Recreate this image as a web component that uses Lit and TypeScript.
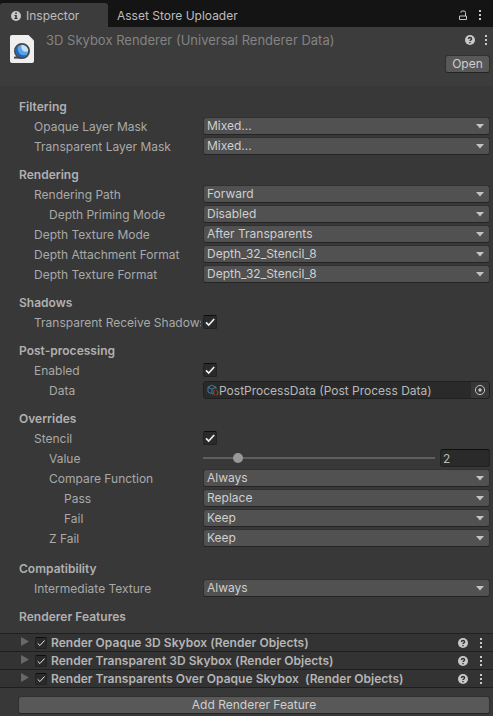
import { LitElement, html, css } from "lit";
import { customElement } from "lit/decorators.js";
import { classMap } from "lit/directives/class-map.js";

type Row = {
  label: string;
  depth?: number;
  kind: "menu" | "check" | "object" | "slider";
  value?: string;
};
type Section = { title: string; rows: Row[]; last?: boolean };

const menu = (label: string, value: string, depth = 1): Row => ({ label, value, depth, kind: "menu" });

const SECTIONS: Section[] = [
  {
    title: "Filtering",
    rows: [menu("Opaque Layer Mask", "Mixed..."), menu("Transparent Layer Mask", "Mixed...")],
  },
  {
    title: "Rendering",
    rows: [
      menu("Rendering Path", "Forward"),
      menu("Depth Priming Mode", "Disabled", 2),
      menu("Depth Texture Mode", "After Transparents"),
      menu("Depth Attachment Format", "Depth_32_Stencil_8"),
      menu("Depth Texture Format", "Depth_32_Stencil_8"),
    ],
  },
  { title: "Shadows", rows: [{ label: "Transparent Receive Shadows", kind: "check" }] },
  {
    title: "Post-processing",
    rows: [
      { label: "Enabled", kind: "check" },
      { label: "Data", depth: 2, kind: "object", value: "PostProcessData (Post Process Data)" },
    ],
  },
  {
    title: "Overrides",
    last: true,
    rows: [
      { label: "Stencil", kind: "check" },
      { label: "Value", depth: 2, kind: "slider", value: "2" },
      menu("Compare Function", "Always", 2),
      menu("Pass", "Replace", 3),
      menu("Fail", "Keep", 3),
      menu("Z Fail", "Keep", 2),
    ],
  },
  { title: "Compatibility", rows: [menu("Intermediate Texture", "Always")] },
  { title: "Renderer Features", rows: [] },
];

const FEATURES = [
  "Render Opaque 3D Skybox (Render Objects)",
  "Render Transparent 3D Skybox (Render Objects)",
  "Render Transparents Over Opaque Skybox\u00a0 (Render Objects)",
];

const dots = html`<svg class="dots" width="4" height="12" viewBox="0 0 4 12">
  <path d="M1 1h2v2H1zM1 5h2v2H1zM1 9h2v2H1z" fill="#c8c8c8" />
</svg>`;

const help = html`<svg width="10" height="10" viewBox="0 0 10 10">
  <circle cx="5" cy="5" r="5" fill="#c8c8c8" />
  <path d="M3.4 3.9C3.4 2.1 6.6 2.1 6.6 3.9C6.6 4.9 5 4.8 5 6.1" fill="none" stroke="#333" stroke-width="1.4" />
  <path d="M4.3 7h1.4v1.3H4.3z" fill="#333" />
</svg>`;

@customElement("check-box")
export class CheckBox extends LitElement {
  static properties = { thin: { type: Boolean, reflect: true } };
  static styles = css`
    :host {
      display: block;
      box-sizing: border-box;
      width: 14px;
      height: 14px;
      border: 1px solid #222;
      border-top-color: #0e0e0e;
      border-radius: 2px;
      background: #2a2a2a;
    }
    :host([thin]) {
      width: 12px;
      height: 12px;
    }
    svg {
      display: block;
      width: 100%;
      height: 100%;
    }
    path {
      fill: none;
      stroke: #eee;
      stroke-width: 1.7;
    }
    :host([thin]) path {
      stroke-width: 1.2;
    }
  `;
  render() {
    return html`<svg viewBox="0 0 12 12"><path d="M2 6.4L4.7 9L10.2 3" /></svg>`;
  }
}

@customElement("app-root")
export class AppRoot extends LitElement {
  static styles = css`
    :host {
      display: flex;
      flex-direction: column;
      box-sizing: border-box;
      height: 716px;
      overflow: hidden;
      background: #383838;
      color: #a9a9a9;
      font: 12px/20px Inter, sans-serif;
      white-space: nowrap;
    }
    svg {
      display: block;
      flex: none;
    }
    .tabs {
      display: flex;
      flex: none;
      height: 27px;
      background: #141414;
      color: #bdbdbd;
      align-items: flex-end;
    }
    .tab {
      box-sizing: border-box;
      display: flex;
      align-items: center;
      gap: 5px;
      height: 24px;
      padding: 1px 9px 0;
    }
    .tab.active {
      width: 108px;
      padding-left: 11px;
      background: #3c3c3c;
      border-radius: 3px 3px 0 0;
    }
    .tools {
      display: flex;
      align-items: center;
      gap: 10px;
      height: 24px;
      margin-left: auto;
      padding-right: 11px;
    }
    .head {
      display: flex;
      flex: none;
      box-sizing: border-box;
      height: 59px;
      background: #3c3c3c;
      padding: 8px 5px 0 10px;
    }
    .name {
      margin: -5px 0 0 12px;
      color: #838383;
      font-size: 13px;
      flex: 1;
    }
    .actions {
      display: flex;
      flex-direction: column;
      align-items: flex-end;
    }
    .icons {
      display: flex;
      align-items: center;
      gap: 9px;
      height: 10px;
    }
    .button {
      box-sizing: border-box;
      border: 1px solid #303030;
      border-bottom-color: #242424;
      border-radius: 3px;
      background: #585858;
      color: #cfcfcf;
      text-align: center;
      height: 18px;
      line-height: 16px;
    }
    .open {
      width: 45px;
      margin: 10px -2px 0 0;
    }
    .body {
      padding: 10px 3px 0 0;
      background: #383838;
    }
    section {
      margin-bottom: 8px;
    }
    section.last {
      margin-bottom: 10px;
    }
    .title {
      box-sizing: border-box;
      height: 20px;
      padding: 1px 0 0 19px;
      font-weight: 600;
      letter-spacing: 0.02px;
      color: #b0b0b0;
    }
    .row {
      display: grid;
      grid-template-columns: 203px 1fr;
      grid-template-rows: 20px;
      align-items: center;
    }
    .label {
      box-sizing: border-box;
      height: 20px;
      overflow: hidden;
      margin-right: 2px;
      padding: 1px 0 0 34px;
    }
    .label.d2 {
      padding-left: 49px;
    }
    .label.d3 {
      padding-left: 64px;
    }
    .field {
      box-sizing: border-box;
      display: flex;
      align-items: center;
      justify-content: space-between;
      height: 18px;
      border: 1px solid #303030;
      border-bottom-color: #242424;
      border-radius: 3px;
      background: #515151;
      color: #cfcfcf;
      line-height: 16px;
      padding: 0 5px 0 3px;
    }
    .object {
      background: #2a2a2a;
      border-color: #202020;
      color: #b8b8b8;
      padding: 0;
    }
    .object svg {
      margin: 0 0 0 3px;
    }
    .object .text {
      flex: 1;
      padding-top: 1px;
    }
    .object .picker {
      display: flex;
      align-items: center;
      justify-content: center;
      width: 18px;
      height: 16px;
      background: #373737;
      border-radius: 0 2px 2px 0;
    }
    .object .picker svg {
      margin: 0;
    }
    .slider {
      display: flex;
      align-items: center;
      gap: 5px;
    }
    .track {
      display: flex;
      align-items: center;
      flex: 1;
      height: 2px;
      background: #5e5e5e;
    }
    .thumb {
      width: 10px;
      height: 10px;
      margin-left: 30px;
      border-radius: 50%;
      background: #999;
    }
    .number {
      box-sizing: border-box;
      width: 50px;
      height: 18px;
      border: 1px solid #212121;
      border-top-color: #0e0e0e;
      border-radius: 3px;
      background: #2a2a2a;
      color: #b8b8b8;
      line-height: 17px;
      padding-left: 2px;
    }
    .features {
      margin-top: -1px;
      border-bottom: 1px solid #1f1f1f;
      flex: none;
    }
    .feature {
      display: flex;
      align-items: center;
      box-sizing: border-box;
      height: 18px;
      border-top: 1px solid #1f1f1f;
      background: #333;
      padding: 1px 10px 0 21px;
      font-weight: 600;
      letter-spacing: 0.02px;
      color: #b5b5b5;
      line-height: 16px;
    }
    .fold {
      margin: -3px 6px 0 0;
    }
    .feature .text {
      flex: 1;
      margin-left: 4px;
    }
    .feature .dots {
      margin-left: 11px;
    }
    .add {
      flex: none;
      margin: 8px 3px 0 18px;
    }
  `;

  control(row: Row) {
    switch (row.kind) {
      case "menu":
        return html`<div class="field">
          <span>${row.value}</span>
          <svg width="8" height="5" viewBox="0 0 8 5"><path d="M0 0h8L4 4.6z" fill="#c4c4c4" /></svg>
        </div>`;
      case "check":
        return html`<check-box></check-box>`;
      case "object":
        return html`<div class="field object">
          <svg width="12" height="12" viewBox="0 0 12 12" fill="none">
            <path d="M5.500 10L1 8V3.200L4.700 1.200L9 3.200V5M1 3.200L5 5.200L9 3.200M5 5.200V10" stroke="#3c7f9e" />
            <path d="M8 6.300Q7 6.300 7 7.500T6.200 8.700Q7 8.700 7 9.800T8 11M9.500 6.300Q10.500 6.300 10.500 7.500T11.300 8.700Q10.500 8.700 10.500 9.800T9.500 11" stroke="#b9472c" />
          </svg>
          <span class="text">${row.value}</span>
          <span class="picker">
            <svg width="12" height="12" viewBox="0 0 12 12">
              <circle cx="6" cy="6" r="4.600" fill="none" stroke="#c4c4c4" />
              <circle cx="6" cy="6" r="1.700" fill="#c4c4c4" />
            </svg>
          </span>
        </div>`;
      case "slider":
        return html`<div class="slider">
          <div class="track"><div class="thumb"></div></div>
          <div class="number">${row.value}</div>
        </div>`;
    }
  }

  render() {
    return html`
      <div class="tabs">
        <div class="tab active">
          <svg width="10" height="10" viewBox="0 0 10 10">
            <circle cx="5" cy="5" r="5" fill="#c8c8c8" />
            <path d="M4.200 1.600h1.600v1.500H4.200zM3.500 4h2.300v3h.8v1.100H3.400V7h.8V5h-.7z" fill="#333" />
          </svg>
          <span>Inspector</span>
        </div>
        <div class="tab">Asset Store Uploader</div>
        <div class="tools">
          <svg width="10" height="11" viewBox="0 0 10 11" fill="none" stroke="#c8c8c8">
            <path d="M1.500 6h7v3.500h-7zM3 2.800V2Q3 1 4 1H6Q7.500 1 7.500 2.500V6" />
          </svg>
          ${dots}
        </div>
      </div>
      <div class="head">
        <svg width="24" height="28" viewBox="0 0 24 28">
          <defs>
            <clipPath id="disc"><circle cx="12" cy="16" r="6.500" /></clipPath>
          </defs>
          <path d="M2 0H18.500L24 5.500V26Q24 28 22 28H2Q0 28 0 26V2Q0 0 2 0z" fill="#efefef" />
          <path d="M4 22.600h8" stroke="#484848" stroke-width="2" />
          <g clip-path="url(#disc)">
            <circle cx="12" cy="16" r="7" fill="#1768c0" />
            <circle cx="14" cy="14" r="6.300" fill="#5aa3e8" />
            <circle cx="16" cy="12" r="4.800" fill="#c6e0f7" />
          </g>
          <circle cx="12" cy="16" r="7.100" fill="none" stroke="#484848" stroke-width="1.800" />
        </svg>
        <div class="name">3D Skybox Renderer (Universal Renderer Data)</div>
        <div class="actions">
          <div class="icons">${help}${dots}</div>
          <div class="button open">Open</div>
        </div>
      </div>
      <div class="body">
        ${SECTIONS.map(
          (s) => html`<section class=${classMap({ last: !!s.last })}>
            <div class="title">${s.title}</div>
            ${s.rows.map(
              (r) => html`<div class="row">
                <div class=${classMap({ label: true, d2: r.depth === 2, d3: r.depth === 3 })}>${r.label}</div>
                ${this.control(r)}
              </div>`
            )}
          </section>`
        )}
      </div>
      <div class="features">
        ${FEATURES.map(
          (f) => html`<div class="feature">
            <svg class="fold" width="8" height="9" viewBox="0 0 8 9"><path d="M0 0L8 4.500L0 9z" fill="#686868" /></svg>
            <check-box thin></check-box>
            <span class="text">${f}</span>
            ${help}${dots}
          </div>`
        )}
      </div>
      <div class="button add">Add Renderer Feature</div>
    `;
  }
}
